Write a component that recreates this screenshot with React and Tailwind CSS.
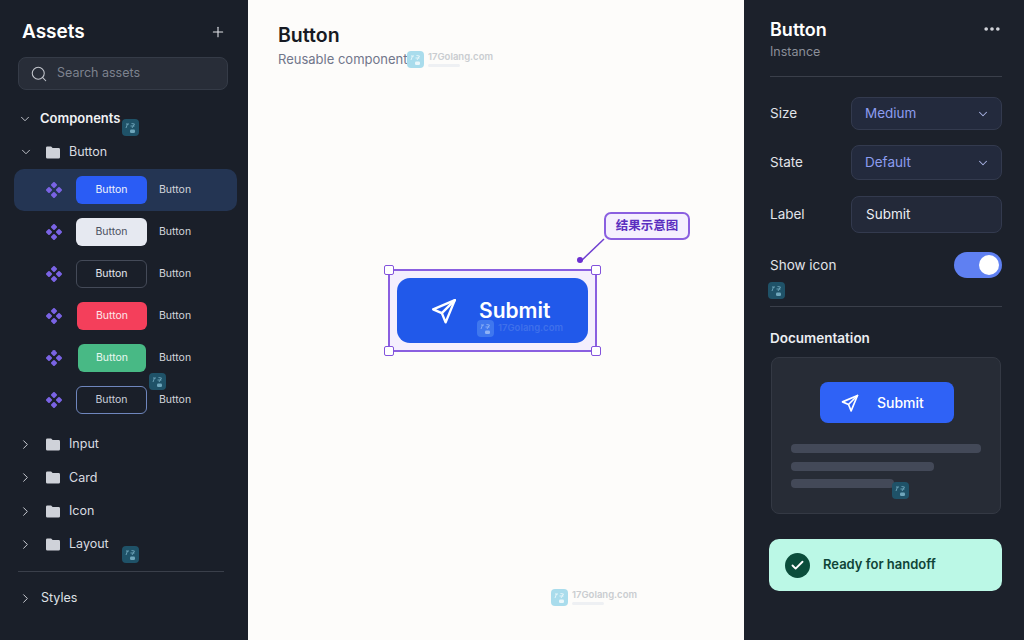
import React from "react";
import { ChevronDown, ChevronRight, Plus, Search, Check, MoreHorizontal } from "lucide-react";

const font = { fontFamily: "Inter, 'Noto Sans CJK SC', sans-serif" };

function Plane({ size, className }) {
  return (
    <svg width={size} height={size} viewBox="0 0 24 24" fill="none" stroke="currentColor" strokeWidth="2.2" strokeLinejoin="round" strokeLinecap="round" className={className}>
      <path d="M22 2 2 10.5l8 3.5 3.5 8.5L22 2Z" />
      <path d="M22 2 10 14" />
    </svg>
  );
}

function Diamonds() {
  return (
    <svg width="16" height="16" viewBox="0 0 16 16" fill="#7a63e4" className="shrink-0">
      <rect x="5.6" y="0.6" width="4.8" height="4.8" rx="1" transform="rotate(45 8 3)" />
      <rect x="0.6" y="5.6" width="4.8" height="4.8" rx="1" transform="rotate(45 3 8)" />
      <rect x="10.6" y="5.6" width="4.8" height="4.8" rx="1" transform="rotate(45 13 8)" />
      <rect x="5.6" y="10.6" width="4.8" height="4.8" rx="1" transform="rotate(45 8 13)" />
    </svg>
  );
}

function FolderIcon() {
  return (
    <svg width="14" height="13" viewBox="0 0 15 13" className="shrink-0">
      <path d="M1.5 0h4l1.6 1.8H13.5A1.5 1.5 0 0 1 15 3.3v8.2a1.5 1.5 0 0 1-1.5 1.5h-12A1.5 1.5 0 0 1 0 11.5v-10A1.5 1.5 0 0 1 1.5 0Z" fill="#cfd2d9" />
    </svg>
  );
}

function Tile({ bg, stroke }) {
  return (
    <svg width="17" height="17" viewBox="0 0 17 17" className="shrink-0">
      <rect width="17" height="17" rx="4" fill={bg} />
      <path d="M4 5h3M5.5 5 4 9M9.5 4.5 12.5 5 10 9M8.5 7h4" stroke={stroke} strokeWidth="0.9" fill="none" />
      <rect x="8" y="10.5" width="5" height="3.5" rx="1.2" fill={stroke} />
    </svg>
  );
}

function Mark({ className }) {
  return (
    <div className={`absolute pointer-events-none ${className}`}>
      <Tile bg="#1f5268" stroke="#6fa6bb" />
    </div>
  );
}

function FullMark({ className }) {
  return (
    <div className={`absolute flex items-center gap-[4px] pointer-events-none ${className}`}>
      <Tile bg="#a9dcec" stroke="#eaf7fb" />
      <div className="flex flex-col leading-none">
        <span className="text-[9.5px] font-semibold text-[#c9ccd0]">17Golang.com</span>
        <span className="block w-[32px] h-[3px] mt-[2px] rounded-full bg-[#eef0f3]" />
      </div>
    </div>
  );
}

const rows = [
  { cls: "bg-[#2a5cf5] text-[#eef1fb] w-[71px]", active: true },
  { cls: "bg-[#e6e9f1] text-[#4a5060] w-[71px]" },
  { cls: "border border-[#444a58] text-[#e6e8ee] w-[71px]" },
  { cls: "bg-[#f43f5b] text-[#fde6ea] w-[70px] ml-px" },
  { cls: "bg-[#48b985] text-[#e9f8f1] w-[68px] ml-[2px]" },
  { cls: "border border-[#6f86bd] text-[#c9cedb] w-[71px]" },
];

function Row({ cls, active }) {
  return (
    <div className={`h-[42px] -ml-1 -mr-[7px] pl-[32px] flex items-center rounded-[10px] ${active ? "bg-[#243553]" : ""}`}>
      <Diamonds />
      <div className="w-[71px] ml-[14px] flex">
        <div className={`h-[28px] rounded-[6px] flex items-center justify-center text-[10.5px] ${cls}`}>Button</div>
      </div>
      <span className="ml-[12px] text-[10.5px] text-[#d3d6dc]">Button</span>
    </div>
  );
}

function FolderRow({ name }) {
  return (
    <div className="h-[33.3px] flex items-center text-[#d9dbe0]">
      <ChevronRight size={15} strokeWidth={1.6} className="text-[#c9ccd3]" />
      <div className="ml-[13px]"><FolderIcon /></div>
      <span className="ml-[9px] text-[12.5px]">{name}</span>
    </div>
  );
}

function Field({ label, children, h, mb }) {
  return (
    <div className={`flex items-center justify-between ${h} ${mb}`}>
      <span className="text-[13.5px] text-[#e2e4e9]">{label}</span>
      {children}
    </div>
  );
}

function Select({ value, h }) {
  return (
    <div className={`w-[151px] ${h} rounded-[8px] border border-[#333a4e] bg-[#232a3d] flex items-center justify-between pl-[13px] pr-[11px]`}>
      <span className="text-[13.5px] text-[#8c9cef]">{value}</span>
      <ChevronDown size={14} strokeWidth={1.8} className="text-[#aab4e6]" />
    </div>
  );
}

export default function App() {
  return (
    <div style={font} className="relative w-[1024px] h-[640px] overflow-hidden flex bg-[#1c212b]">
      <aside className="relative w-[248px] shrink-0 bg-[#1a1f29] px-[18px] pt-[19px]">
        <div className="flex items-center justify-between h-[26px] pl-1 pr-1">
          <span className="text-[19px] font-semibold text-white">Assets</span>
          <Plus size={16} strokeWidth={1.6} className="text-[#e3e5ea]" />
        </div>
        <div className="mt-[12px] w-[210px] h-[33px] rounded-[8px] border border-[#353b47] bg-[#282d38] flex items-center pl-[11px]">
          <Search size={18} strokeWidth={1.4} className="text-[#c3c6cd]" />
          <span className="ml-[9px] text-[12.5px] text-[#7d828e]">Search assets</span>
        </div>
        <div className="mt-[17px] h-[24px] flex items-center">
          <ChevronDown size={14} strokeWidth={1.6} className="text-[#c9ccd3]" />
          <span className="ml-[8px] text-[13px] font-semibold text-[#f0f1f4]">Components</span>
        </div>
        <div className="mt-[9px] h-[24px] flex items-center text-[#d9dbe0]">
          <ChevronDown size={14} strokeWidth={1.6} className="ml-px text-[#c9ccd3]" />
          <div className="ml-[13px]"><FolderIcon /></div>
          <span className="ml-[9px] text-[12.5px]">Button</span>
        </div>
        <div className="mt-[5px]">
          {rows.map((r, i) => <Row key={i} {...r} />)}
        </div>
        <div className="mt-[7px]">
          {["Input", "Card", "Icon", "Layout"].map((n) => <FolderRow key={n} name={n} />)}
        </div>
        <div className="mt-[10px] w-[206px] h-px bg-[#3a3f4a]" />
        <div className="mt-[14px] h-[24px] flex items-center">
          <ChevronRight size={15} strokeWidth={1.6} className="text-[#c9ccd3]" />
          <span className="ml-[8px] text-[12.5px] text-[#dfe1e6]">Styles</span>
        </div>
        <Mark className="left-[122px] top-[119px]" />
        <Mark className="left-[149px] top-[373px]" />
        <Mark className="left-[122px] top-[546px]" />
      </aside>

      <main className="relative w-[496px] shrink-0 bg-[#fdfcfa] pl-[30px] pt-[23px]">
        <div className="text-[19.5px] leading-[24px] font-semibold text-[#171a23]">Button</div>
        <div className="mt-[3px] text-[13px] leading-[18px] text-[#71768a]">Reusable component</div>
        <div className="relative ml-[110px] mt-[201px] w-[209px] h-[83px] border-2 border-[#8a5fe0] bg-[#f4effd] p-[7px]">
          <div className="h-[65px] rounded-[13px] bg-[#2159ea] flex items-center pl-[34px] text-white">
            <Plane size={26} />
            <span className="ml-[22px] text-[21px] font-semibold">Submit</span>
          </div>
          <span className="absolute -left-[6px] -top-[6px] w-[10px] h-[10px] bg-white border-[1.5px] border-[#8353dc] rounded-[2px]" />
          <span className="absolute -right-[6px] -top-[6px] w-[10px] h-[10px] bg-white border-[1.5px] border-[#8353dc] rounded-[2px]" />
          <span className="absolute -left-[6px] -bottom-[6px] w-[10px] h-[10px] bg-white border-[1.5px] border-[#8353dc] rounded-[2px]" />
          <span className="absolute -right-[6px] -bottom-[6px] w-[10px] h-[10px] bg-white border-[1.5px] border-[#8353dc] rounded-[2px]" />
          <svg width="30" height="30" viewBox="0 0 30 30" className="absolute left-[187px] -top-[38px] overflow-visible">
            <path d="M3 29 27 6" stroke="#6f3fd0" strokeWidth="1.5" fill="none" />
            <circle cx="3" cy="27" r="3" fill="#6c2fd0" />
          </svg>
          <div className="absolute left-[214px] -top-[59px] w-[86px] h-[28px] rounded-[7px] border-2 border-[#8a5fe0] bg-[#f5f0fe] flex items-center justify-center text-[12.5px] font-semibold text-[#5b2fc0] whitespace-nowrap">
            结果示意图
          </div>
        </div>
        <FullMark className="left-[159px] top-[51px]" />
        <FullMark className="left-[303px] top-[589px]" />
        <div className="absolute left-[229px] top-[320px] flex items-center gap-[4px] pointer-events-none">
          <Tile bg="#3f77ee" stroke="#8fb2f5" />
          <span className="text-[9.5px] font-semibold text-[#3f70ea]">17Golang.com</span>
        </div>
      </main>

      <aside className="relative flex-1 bg-[#1c212b] pl-[26px] pr-[22px] pt-[18px]">
        <div className="flex items-center justify-between h-[22px]">
          <span className="text-[18px] font-semibold text-white">Button</span>
          <MoreHorizontal size={20} strokeWidth={2.4} className="text-[#d5d7dd]" />
        </div>
        <div className="mt-[3px] text-[12.5px] leading-[18px] text-[#8b8f99]">Instance</div>
        <div className="mt-[15px] h-px bg-[#3a3f4a]" />
        <div className="mt-[20px]">
          <Field label="Size" h="h-[33px]" mb="mb-[15px]"><Select value="Medium" h="h-[33px]" /></Field>
          <Field label="State" h="h-[35px]" mb="mb-[16px]"><Select value="Default" h="h-[35px]" /></Field>
          <Field label="Label" h="h-[37px]" mb="mb-[19px]">
            <div className="w-[151px] h-[37px] rounded-[8px] border border-[#333a4e] bg-[#232939] flex items-center pl-[14px] text-[13.5px] text-[#eceef3]">Submit</div>
          </Field>
          <Field label="Show icon" h="h-[26px]" mb="">
            <div className="w-[48px] h-[26px] rounded-full bg-[#5f80f2] flex items-center justify-end pr-[3px]">
              <div className="w-[20px] h-[20px] rounded-full bg-white" />
            </div>
          </Field>
        </div>
        <div className="mt-[28px] h-px bg-[#3a3f4a]" />
        <div className="mt-[21px] text-[13.5px] leading-[20px] font-semibold text-[#eceef2]">Documentation</div>
        <div className="mt-[9px] ml-px w-[230px] h-[157px] rounded-[8px] border border-[#343944] bg-[#272c36] pt-[24px] px-[19px]">
          <div className="ml-[29px] w-[134px] h-[41px] rounded-[8px] bg-[#2f62f6] flex items-center pl-[21px] text-white">
            <Plane size={18} />
            <span className="ml-[18px] text-[14px] font-medium">Submit</span>
          </div>
          <div className="mt-[21px] w-[190px] h-[9px] rounded-[4px] bg-[#434958]" />
          <div className="mt-[9px] w-[143px] h-[9px] rounded-[4px] bg-[#434958]" />
          <div className="mt-[8px] w-[103px] h-[9px] rounded-[4px] bg-[#434958]" />
        </div>
        <div className="mt-[25px] -ml-px w-[233px] h-[52px] rounded-[10px] bg-[#bbf8e6] flex items-center pl-[16px]">
          <div className="w-[25px] h-[25px] rounded-full bg-[#0b4d3b] flex items-center justify-center">
            <Check size={15} strokeWidth={3} className="text-white" />
          </div>
          <span className="ml-[13px] text-[13px] font-semibold text-[#0f4437]">Ready for handoff</span>
        </div>
        <Mark className="left-[24px] top-[282px]" />
        <Mark className="left-[148px] top-[482px]" />
      </aside>
    </div>
  );
}
